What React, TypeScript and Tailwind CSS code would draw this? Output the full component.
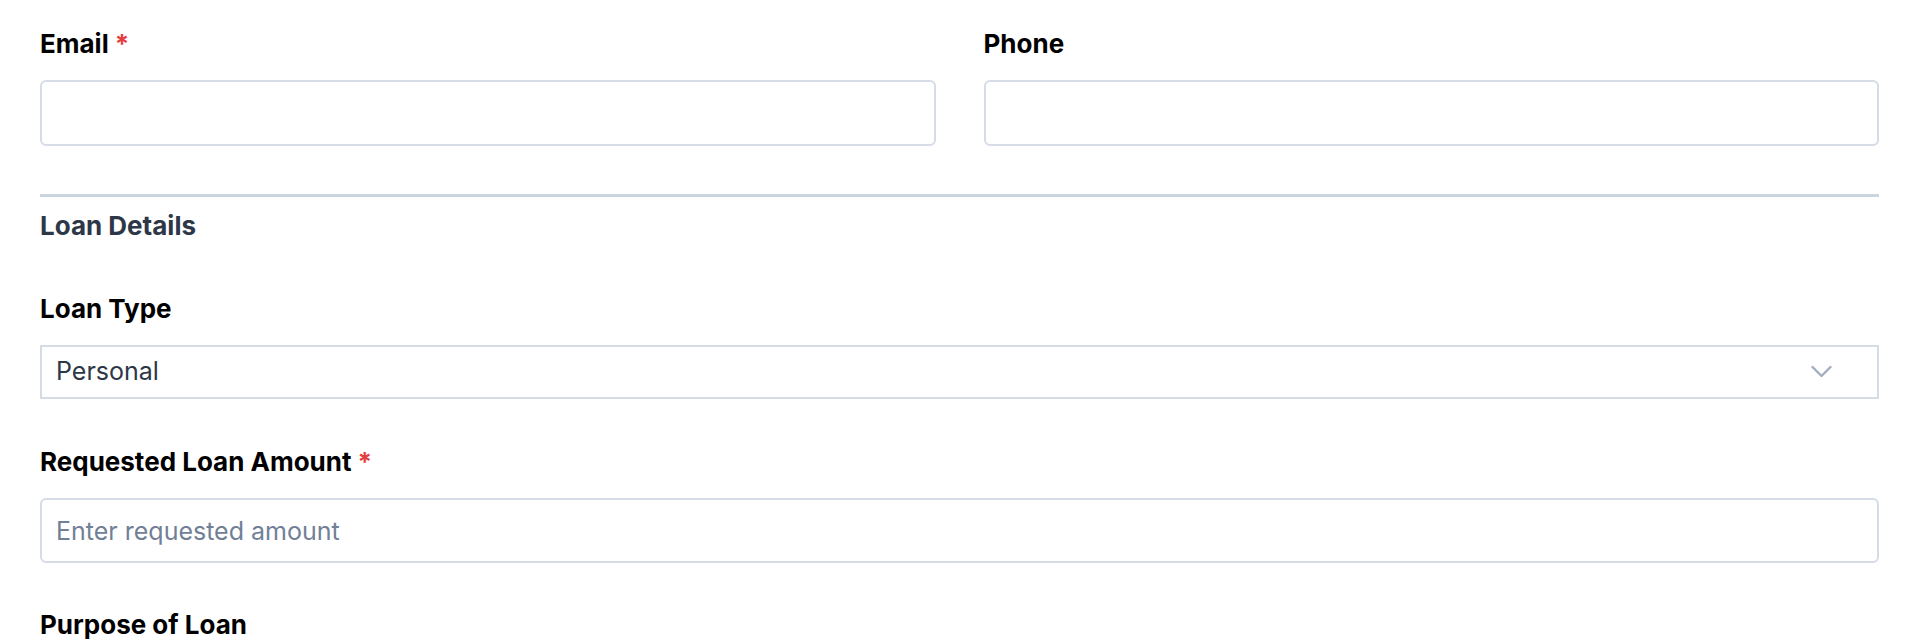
import React, { useState } from 'react';

const labelCls = 'block text-[26px] leading-[36px] font-bold text-black mb-[18px]';
const inputCls =
  'block w-full h-[66px] rounded-[6px] border-2 border-[#d5dce6] bg-white px-[14px] text-[25px] text-[#2d3748] placeholder:text-[#718096] outline-none';

const Required = () => <span className="text-[#e53e3e] ml-[6px]">*</span>;

export default function App() {
  const [email, setEmail] = useState('');
  const [phone, setPhone] = useState('');
  const [loanType, setLoanType] = useState('personal');
  const [amount, setAmount] = useState('');

  return (
    <div
      className="min-h-[640px] bg-white pt-[26px] pl-[40px] pr-[41px]"
      style={{ fontFamily: 'Inter, "Noto Sans", sans-serif' }}
    >
      <div className="grid grid-cols-2 gap-x-[48px]">
        <div>
          <label className={labelCls}>
            Email
            <Required />
          </label>
          <input
            type="email"
            value={email}
            onChange={(e) => setEmail(e.target.value)}
            className={inputCls}
          />
        </div>
        <div>
          <label className={labelCls}>Phone</label>
          <input
            type="tel"
            value={phone}
            onChange={(e) => setPhone(e.target.value)}
            className={inputCls}
          />
        </div>
      </div>

      <div className="mt-[48px] h-[3px] bg-[#cbd5e0]" />

      <h3 className="mt-[11px] text-[26px] leading-[36px] font-bold text-[#2d3748]">
        Loan Details
      </h3>

      <div className="mt-[47px]">
        <label className={labelCls}>Loan Type</label>
        <div className="relative">
          <select
            value={loanType}
            onChange={(e) => setLoanType(e.target.value)}
            className="block w-full h-[54px] appearance-none rounded-none border-2 border-[#d5dce6] bg-white pl-[14px] text-[25px] text-[#2d3748] outline-none"
          >
            <option value="personal">Personal</option>
            <option value="auto">Auto</option>
            <option value="mortgage">Mortgage</option>
            <option value="business">Business</option>
          </select>
          <svg
            className="pointer-events-none absolute right-[47px] top-1/2 -translate-y-1/2"
            width="21"
            height="13"
            viewBox="0 0 21 13"
            fill="none"
          >
            <path
              d="M1.5 1.5 L10.5 10.5 L19.5 1.5"
              stroke="#a0aec0"
              strokeWidth="2.4"
              strokeLinecap="round"
              strokeLinejoin="round"
            />
          </svg>
        </div>
      </div>

      <div className="mt-[45px]">
        <label className={labelCls}>
          Requested Loan Amount
          <Required />
        </label>
        <input
          type="text"
          value={amount}
          onChange={(e) => setAmount(e.target.value)}
          placeholder="Enter requested amount"
          className={inputCls + ' !h-[65px]'}
        />
      </div>

      <div className="mt-[44px]">
        <label className={labelCls}>Purpose of Loan</label>
      </div>
    </div>
  );
}
